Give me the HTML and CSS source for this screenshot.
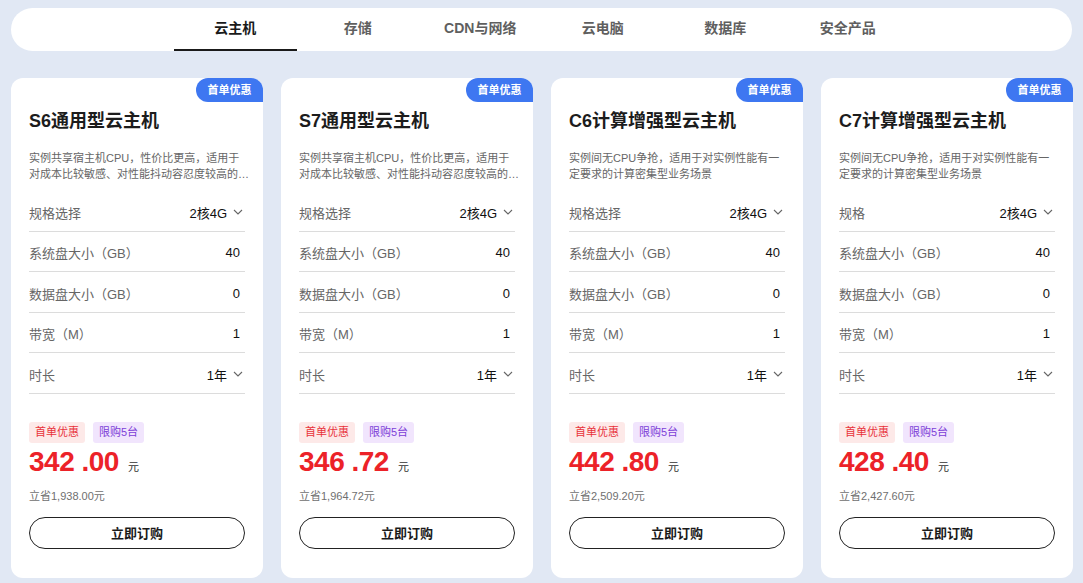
FILE: index.html
```html
<!DOCTYPE html>
<html lang="zh-CN">
<head>
<meta charset="utf-8">
<title>云主机</title>
<link rel="stylesheet" href="styles.css">
</head>
<body>
<div class="page">
  <nav class="tabs">
    <div class="tab active">云主机</div>
    <div class="tab">存储</div>
    <div class="tab">CDN与网络</div>
    <div class="tab">云电脑</div>
    <div class="tab">数据库</div>
    <div class="tab">安全产品</div>
  </nav>

  <div class="cards">
    <div class="card">
      <div class="badge">首单优惠</div>
      <h3 class="title">S6通用型云主机</h3>
      <p class="desc">实例共享宿主机CPU，性价比更高，适用于对成本比较敏感、对性能抖动容忍度较高的场景</p>
      <div class="row"><span class="label">规格选择</span><span class="value sel">2核4G<svg class="chev" viewBox="0 0 10 6"><polyline points="1,1 5,5 9,1"/></svg></span></div>
      <div class="row"><span class="label">系统盘大小（GB）</span><span class="value">40</span></div>
      <div class="row"><span class="label">数据盘大小（GB）</span><span class="value">0</span></div>
      <div class="row"><span class="label">带宽（M）</span><span class="value">1</span></div>
      <div class="row"><span class="label">时长</span><span class="value sel">1年<svg class="chev" viewBox="0 0 10 6"><polyline points="1,1 5,5 9,1"/></svg></span></div>
      <div class="tags"><span class="tag red">首单优惠</span><span class="tag purple">限购5台</span></div>
      <div class="price"><span class="num">342 .00</span><span class="unit">元</span></div>
      <div class="save">立省1,938.00元</div>
      <button class="buy">立即订购</button>
    </div>

    <div class="card">
      <div class="badge">首单优惠</div>
      <h3 class="title">S7通用型云主机</h3>
      <p class="desc">实例共享宿主机CPU，性价比更高，适用于对成本比较敏感、对性能抖动容忍度较高的场景</p>
      <div class="row"><span class="label">规格选择</span><span class="value sel">2核4G<svg class="chev" viewBox="0 0 10 6"><polyline points="1,1 5,5 9,1"/></svg></span></div>
      <div class="row"><span class="label">系统盘大小（GB）</span><span class="value">40</span></div>
      <div class="row"><span class="label">数据盘大小（GB）</span><span class="value">0</span></div>
      <div class="row"><span class="label">带宽（M）</span><span class="value">1</span></div>
      <div class="row"><span class="label">时长</span><span class="value sel">1年<svg class="chev" viewBox="0 0 10 6"><polyline points="1,1 5,5 9,1"/></svg></span></div>
      <div class="tags"><span class="tag red">首单优惠</span><span class="tag purple">限购5台</span></div>
      <div class="price"><span class="num">346 .72</span><span class="unit">元</span></div>
      <div class="save">立省1,964.72元</div>
      <button class="buy">立即订购</button>
    </div>

    <div class="card">
      <div class="badge">首单优惠</div>
      <h3 class="title">C6计算增强型云主机</h3>
      <p class="desc">实例间无CPU争抢，适用于对实例性能有一定要求的计算密集型业务场景</p>
      <div class="row"><span class="label">规格选择</span><span class="value sel">2核4G<svg class="chev" viewBox="0 0 10 6"><polyline points="1,1 5,5 9,1"/></svg></span></div>
      <div class="row"><span class="label">系统盘大小（GB）</span><span class="value">40</span></div>
      <div class="row"><span class="label">数据盘大小（GB）</span><span class="value">0</span></div>
      <div class="row"><span class="label">带宽（M）</span><span class="value">1</span></div>
      <div class="row"><span class="label">时长</span><span class="value sel">1年<svg class="chev" viewBox="0 0 10 6"><polyline points="1,1 5,5 9,1"/></svg></span></div>
      <div class="tags"><span class="tag red">首单优惠</span><span class="tag purple">限购5台</span></div>
      <div class="price"><span class="num">442 .80</span><span class="unit">元</span></div>
      <div class="save">立省2,509.20元</div>
      <button class="buy">立即订购</button>
    </div>

    <div class="card">
      <div class="badge">首单优惠</div>
      <h3 class="title">C7计算增强型云主机</h3>
      <p class="desc">实例间无CPU争抢，适用于对实例性能有一定要求的计算密集型业务场景</p>
      <div class="row"><span class="label">规格</span><span class="value sel">2核4G<svg class="chev" viewBox="0 0 10 6"><polyline points="1,1 5,5 9,1"/></svg></span></div>
      <div class="row"><span class="label">系统盘大小（GB）</span><span class="value">40</span></div>
      <div class="row"><span class="label">数据盘大小（GB）</span><span class="value">0</span></div>
      <div class="row"><span class="label">带宽（M）</span><span class="value">1</span></div>
      <div class="row"><span class="label">时长</span><span class="value sel">1年<svg class="chev" viewBox="0 0 10 6"><polyline points="1,1 5,5 9,1"/></svg></span></div>
      <div class="tags"><span class="tag red">首单优惠</span><span class="tag purple">限购5台</span></div>
      <div class="price"><span class="num">428 .40</span><span class="unit">元</span></div>
      <div class="save">立省2,427.60元</div>
      <button class="buy">立即订购</button>
    </div>
  </div>
</div>
</body>
</html>
```

FILE: styles.css
```css
* { box-sizing: border-box; }
html, body {
  margin: 0;
  padding: 0;
  background: #e1e8f4;
  font-family: "Liberation Sans", "Noto Sans CJK SC", sans-serif;
  color: #222;
}
.page {
  width: 1083px;
  height: 583px;
  padding: 8px 10px 0 11px;
  overflow: hidden;
}
.tabs {
  height: 43px;
  width: 1061px;
  background: #fff;
  border-radius: 22px;
  display: flex;
  justify-content: center;
}
.tab {
  width: 122.5px;
  height: 43px;
  line-height: 41px;
  text-align: center;
  font-size: 14px;
  font-weight: bold;
  color: #5f5f5f;
  border-bottom: 2px solid transparent;
}
.tab.active {
  color: #1a1a1a;
  border-bottom-color: #1a1a1a;
}
.cards {
  margin-top: 27px;
  display: grid;
  grid-template-columns: repeat(4, 252px);
  column-gap: 18px;
}
.card {
  position: relative;
  background: #fff;
  border-radius: 12px;
  overflow: hidden;
  padding: 31px 18px 29px;
  display: flex;
  flex-direction: column;
}
.badge {
  position: absolute;
  top: 0;
  right: 0;
  width: 67px;
  height: 24px;
  line-height: 24px;
  text-align: center;
  background: #3e77f1;
  color: #fff;
  font-size: 11px;
  font-weight: bold;
  border-radius: 12px 0 0 12px;
}
.title {
  margin: 0;
  font-size: 18px;
  line-height: 24px;
  font-weight: bold;
  color: #1c1c1c;
}
.desc {
  margin: 17px -4px 9px 0;
  font-size: 11px;
  line-height: 16px;
  height: 32px;
  color: #666;
  display: -webkit-box;
  -webkit-line-clamp: 2;
  -webkit-box-orient: vertical;
  overflow: hidden;
}
.row {
  height: 40.5px;
  border-bottom: 1px solid #dcdcdc;
  display: flex;
  align-items: center;
  justify-content: space-between;
  font-size: 13px;
  padding-top: 3px;
}
.label { color: #666; }
.value {
  color: #111;
  margin-right: 5px;
  display: flex;
  align-items: center;
}
.value.sel { margin-right: 2px; }
.chev {
  width: 10px;
  height: 6px;
  margin-left: 6px;
  fill: none;
  stroke: #666;
  stroke-width: 1.1;
}
.tags {
  margin-top: 28px;
  display: flex;
  gap: 8px;
}
.tag {
  height: 21px;
  line-height: 21px;
  padding: 0 6px;
  font-size: 11px;
  border-radius: 3px;
}
.tag.red { background: #fde9e8; color: #e8323a; }
.tag.purple { background: #f1e5fd; color: #7d3fd8; }
.price {
  margin-top: 2px;
  display: flex;
  align-items: baseline;
  height: 34px;
  line-height: 34px;
}
.num {
  font-size: 28px;
  font-weight: bold;
  color: #ec2228;
  letter-spacing: -0.5px;
}
.unit {
  font-size: 11px;
  color: #333;
  margin-left: 9px;
}
.save {
  margin-top: 9px;
  font-size: 11px;
  line-height: 16px;
  color: #6f6f6f;
}
.buy {
  margin-top: 13px;
  height: 32px;
  width: 100%;
  border: 1px solid #222;
  border-radius: 16px;
  background: #fff;
  font-family: inherit;
  font-size: 13px;
  font-weight: bold;
  color: #1a1a1a;
  padding: 0;
}
```
